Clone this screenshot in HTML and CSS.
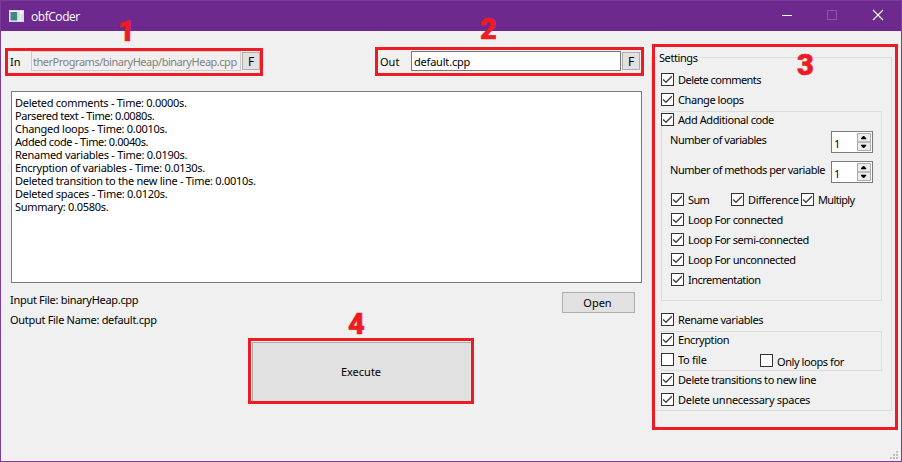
FILE: index.html
```html
<!DOCTYPE html>
<html lang="en">
<head>
<meta charset="utf-8">
<title>obfCoder</title>
<link rel="stylesheet" href="styles.css">
</head>
<body>
<svg class="defs" width="0" height="0" aria-hidden="true">
  <symbol id="tick" viewBox="0 0 11 11"><path d="M1 5.400 4 8.300 9.900 2.300" fill="none" stroke="#444" stroke-width="1.400"/></symbol>
  <symbol id="arrows" viewBox="0 0 14 18">
    <path d="M.5 .5h13v8.5H.5zM.5 9h13v8.5H.5z" fill="#ececec" stroke="#acacac"/>
    <path d="M4 6.2h5.2v-1L7.1 3H6.1L4 5.2zM4 11.8h5.2v1L7.1 15H6.1L4 12.8z" fill="#000"/>
  </symbol>
</svg>
<div class="window">
  <header class="titlebar">
    <svg class="app-icon" width="15" height="12" viewBox="0 0 15 12">
      <defs><linearGradient id="screen" x2="1" y2="1"><stop stop-color="#4d7ba0"/><stop offset="1" stop-color="#2f9070"/></linearGradient></defs>
      <path d="M0 0h15v12H0z" fill="#f4f4f4"/>
      <path d="M1.5 2h6.7v8.5H1.5z" fill="url(#screen)"/>
      <path d="M9 2h2v8.5H9zM12 4h2v6.5h-2z" fill="#d8dde0"/>
      <path d="M.5 .5h14v11H.5z" fill="none" stroke="#d9d9d9"/>
    </svg>
    <h1>obfCoder</h1>
    <svg class="controls" width="102" height="12" viewBox="0 0 102 12">
      <path d="M0 6.500h10" stroke="#fff"/>
      <path d="M45.500 1.500h9v9h-9z" fill="none" stroke="#8d55ab"/>
      <path d="M91 1l10 10M101 1l-10 10" stroke="#fff" stroke-width="1.100"/>
    </svg>
  </header>
  <div class="content">
    <main class="work">
      <div class="files">
        <div class="file file-in"><label>In</label><div class="field disabled"><span>therPrograms/binaryHeap/binaryHeap.cpp</span></div><button>F</button></div>
        <div class="file file-out"><label>Out</label><div class="field"><span>default.cpp</span></div><button>F</button></div>
      </div>
      <div class="log">
        <p>Deleted comments - Time: 0.0000s.</p>
        <p class="narrow">Parsered text - Time: 0.0080s.</p>
        <p>Changed loops - Time: 0.0010s.</p>
        <p class="narrow">Added code - Time: 0.0040s.</p>
        <p>Renamed variables - Time: 0.0190s.</p>
        <p>Encryption of variables - Time: 0.0130s.</p>
        <p>Deleted transition to the new line - Time: 0.0010s.</p>
        <p>Deleted spaces - Time: 0.0120s.</p>
        <p>Summary: 0.0580s.</p>
      </div>
      <div class="result">
        <div class="names"><p>Input File: binaryHeap.cpp</p><p>Output File Name: default.cpp</p></div>
        <button class="open">Open</button>
      </div>
      <button class="execute">Execute</button>
    </main>
    <aside class="settings">
      <h2>Settings</h2>
      <div class="check"><svg><use href="#tick"/></svg><span class="tight">Delete comments</span></div>
      <div class="check"><svg><use href="#tick"/></svg><span>Change loops</span></div>
      <section class="group additional">
        <div class="check"><svg><use href="#tick"/></svg><span>Add Additional code</span></div>
        <div class="number"><span>Number of variables</span><div class="spin"><b>1</b><svg><use href="#arrows"/></svg></div></div>
        <div class="number"><span>Number of methods per variable</span><div class="spin"><b>1</b><svg><use href="#arrows"/></svg></div></div>
        <div class="options">
          <div class="operators">
            <div class="check"><svg><use href="#tick"/></svg><span class="tighter">Sum</span></div>
            <div class="check"><svg><use href="#tick"/></svg><span class="loose">Difference</span></div>
            <div class="check"><svg><use href="#tick"/></svg><span class="tighter">Multiply</span></div>
          </div>
          <div class="check"><svg><use href="#tick"/></svg><span>Loop For connected</span></div>
          <div class="check"><svg><use href="#tick"/></svg><span>Loop For semi-connected</span></div>
          <div class="check"><svg><use href="#tick"/></svg><span>Loop For unconnected</span></div>
          <div class="check"><svg><use href="#tick"/></svg><span class="tight">Incrementation</span></div>
        </div>
      </section>
      <div class="check"><svg><use href="#tick"/></svg><span>Rename variables</span></div>
      <section class="group encryption">
        <div class="check"><svg><use href="#tick"/></svg><span>Encryption</span></div>
        <div class="targets">
          <div class="check"><svg></svg><span class="loose">To file</span></div>
          <div class="check loops-only"><svg></svg><span>Only loops for</span></div>
        </div>
      </section>
      <div class="check"><svg><use href="#tick"/></svg><span>Delete transitions to new line</span></div>
      <div class="check"><svg><use href="#tick"/></svg><span class="loose">Delete unnecessary spaces</span></div>
    </aside>
  </div>
  <svg class="grip" width="8" height="8" viewBox="0 0 8 8"><path d="M6 0h2v2H6zM3 3h2v2H3zM6 3h2v2H6zM0 6h2v2H0zM3 6h2v2H3zM6 6h2v2H6z" fill="#bfbfbf"/></svg>
  <div class="mark mark-1"><span>1</span></div>
  <div class="mark mark-2"><span>2</span></div>
  <div class="mark mark-3"><span>3</span></div>
  <div class="mark mark-4"><span>4</span></div>
</div>
</body>
</html>
```
FILE: styles.css
```css
* { box-sizing: border-box; margin: 0; padding: 0; }
body { width: 902px; height: 462px; overflow: hidden; font: 11px/20px "Noto Sans", "Open Sans", sans-serif; color: #000; }
.defs { position: absolute; }
p, span, label, button, h1, h2 { white-space: nowrap; }
.window { position: relative; width: 902px; height: 462px; background: #f0f0f0; border: 1px solid #7a3d99; border-top-color: #7d3a9c; }
.titlebar { display: flex; align-items: center; height: 30px; padding: 0 17px 0 8px; background: #6e298f; color: #fff; }
.app-icon { margin-top: -1px; }
.titlebar h1 { font: 12px/20px "Open Sans", sans-serif; letter-spacing: -0.45px; margin: 1px 0 0 7px; }
.controls { margin: -2px 0 0 auto; }
.content { display: flex; justify-content: space-between; padding: 20px 9px 0 10px; }
.work { width: 631px; }
.files { display: flex; justify-content: space-between; height: 20px; padding-right: 2px; }
.file { display: flex; align-items: center; gap: 1px; height: 20px; }
.file label { padding-top: 1px; }
.file-in label { width: 20px; margin-left: -1px; }
.file-out label { width: 30px; }
.field { width: 210px; height: 20px; padding: 0 2px; background: #fff; border: 1px solid #7a7a7a; line-height: 20px; letter-spacing: -0.2px; }
.field.disabled { background: #f0f0f0; border: 1px solid #ccc; color: #808080; padding-left: 1px; letter-spacing: -0.48px; }
button { display: block; font: inherit; background: #e1e1e1; border: 1px solid #adadad; text-align: center; color: #000; }
.file button { width: 18px; height: 18px; line-height: 18px; font-size: 12px; }
.log { margin-top: 20px; height: 192px; padding: 4px 3px; background: #fff; border: 1px solid #7a7a7a; line-height: 13px; letter-spacing: -0.28px; }
.log .narrow { letter-spacing: -0.42px; }
.result { display: flex; justify-content: space-between; align-items: flex-start; padding: 7px 7px 0 0; letter-spacing: -0.3px; }
.names { margin-left: -1px; }
.open { width: 73px; height: 21px; margin-top: 2px; padding-right: 2px; }
.execute { width: 220px; height: 60px; margin: 12px 0 0 241px; padding-right: 2px; }
.settings { width: 241px; height: 354px; margin-top: 6px; padding: 0 9px; border: 1px solid #dcdcdc; letter-spacing: -0.42px; }
.settings h2 { width: max-content; height: 18px; background: #f0f0f0; margin: -9px 0 3px -4px; padding: 0 2px; font: inherit; line-height: 18px; }
.check { display: flex; align-items: center; gap: 4px; height: 20px; }
.check svg { flex: none; width: 13px; height: 13px; border: 1px solid #333; background: #fff; margin-top: -1px; }
.tight { letter-spacing: -0.54px; }
.tighter { letter-spacing: -0.65px; }
.loose { letter-spacing: -0.28px; }
.group { border: 1px solid #dcdcdc; width: 221px; }
.group > .check { margin: -2px 0 0 -1px; }
.additional { height: 190px; margin-top: 1px; }
.number { display: flex; justify-content: space-between; height: 30px; padding: 1px 8px 0; }
.number > span { line-height: 18px; letter-spacing: -0.48px; }
.spin { flex: none; display: flex; justify-content: space-between; width: 42px; height: 22px; border: 1px solid #7a7a7a; background: #fff; padding: 1px 1px 1px 2px; line-height: 21px; }
.spin b { font-weight: normal; }
.spin svg { width: 14px; height: 18px; }
.options { padding-left: 9px; }
.operators { display: grid; grid-template-columns: 60px 70px 70px; }
.additional + .check { margin-top: 9px; }
.encryption { height: 40px; margin: 1px 0 -1px; }
.targets { display: grid; grid-template-columns: 99px 1fr; margin-left: -1px; }
.loops-only svg { margin-top: 1px; }
.loops-only span { padding-top: 3px; }
.grip { position: absolute; right: 3px; bottom: 2px; }
.mark { position: absolute; border: 3px solid #ed1c24; color: #ed1c24; font: 900 29px/29px Roboto, sans-serif; -webkit-text-stroke: 0.6px #ed1c24; }
.mark span { position: absolute; }
.mark-1 { left: 4px; top: 47px; width: 258px; height: 28px; }
.mark-1 span { left: 110px; top: -34px; }
.mark-2 { left: 374px; top: 46px; width: 269px; height: 29px; }
.mark-2 span { left: 102px; top: -35px; }
.mark-3 { left: 651px; top: 43px; width: 246px; height: 386px; }
.mark-3 span { left: 142px; top: 4px; }
.mark-4 { left: 247px; top: 337px; width: 226px; height: 66px; }
.mark-4 span { left: 97px; top: -31px; }
```
